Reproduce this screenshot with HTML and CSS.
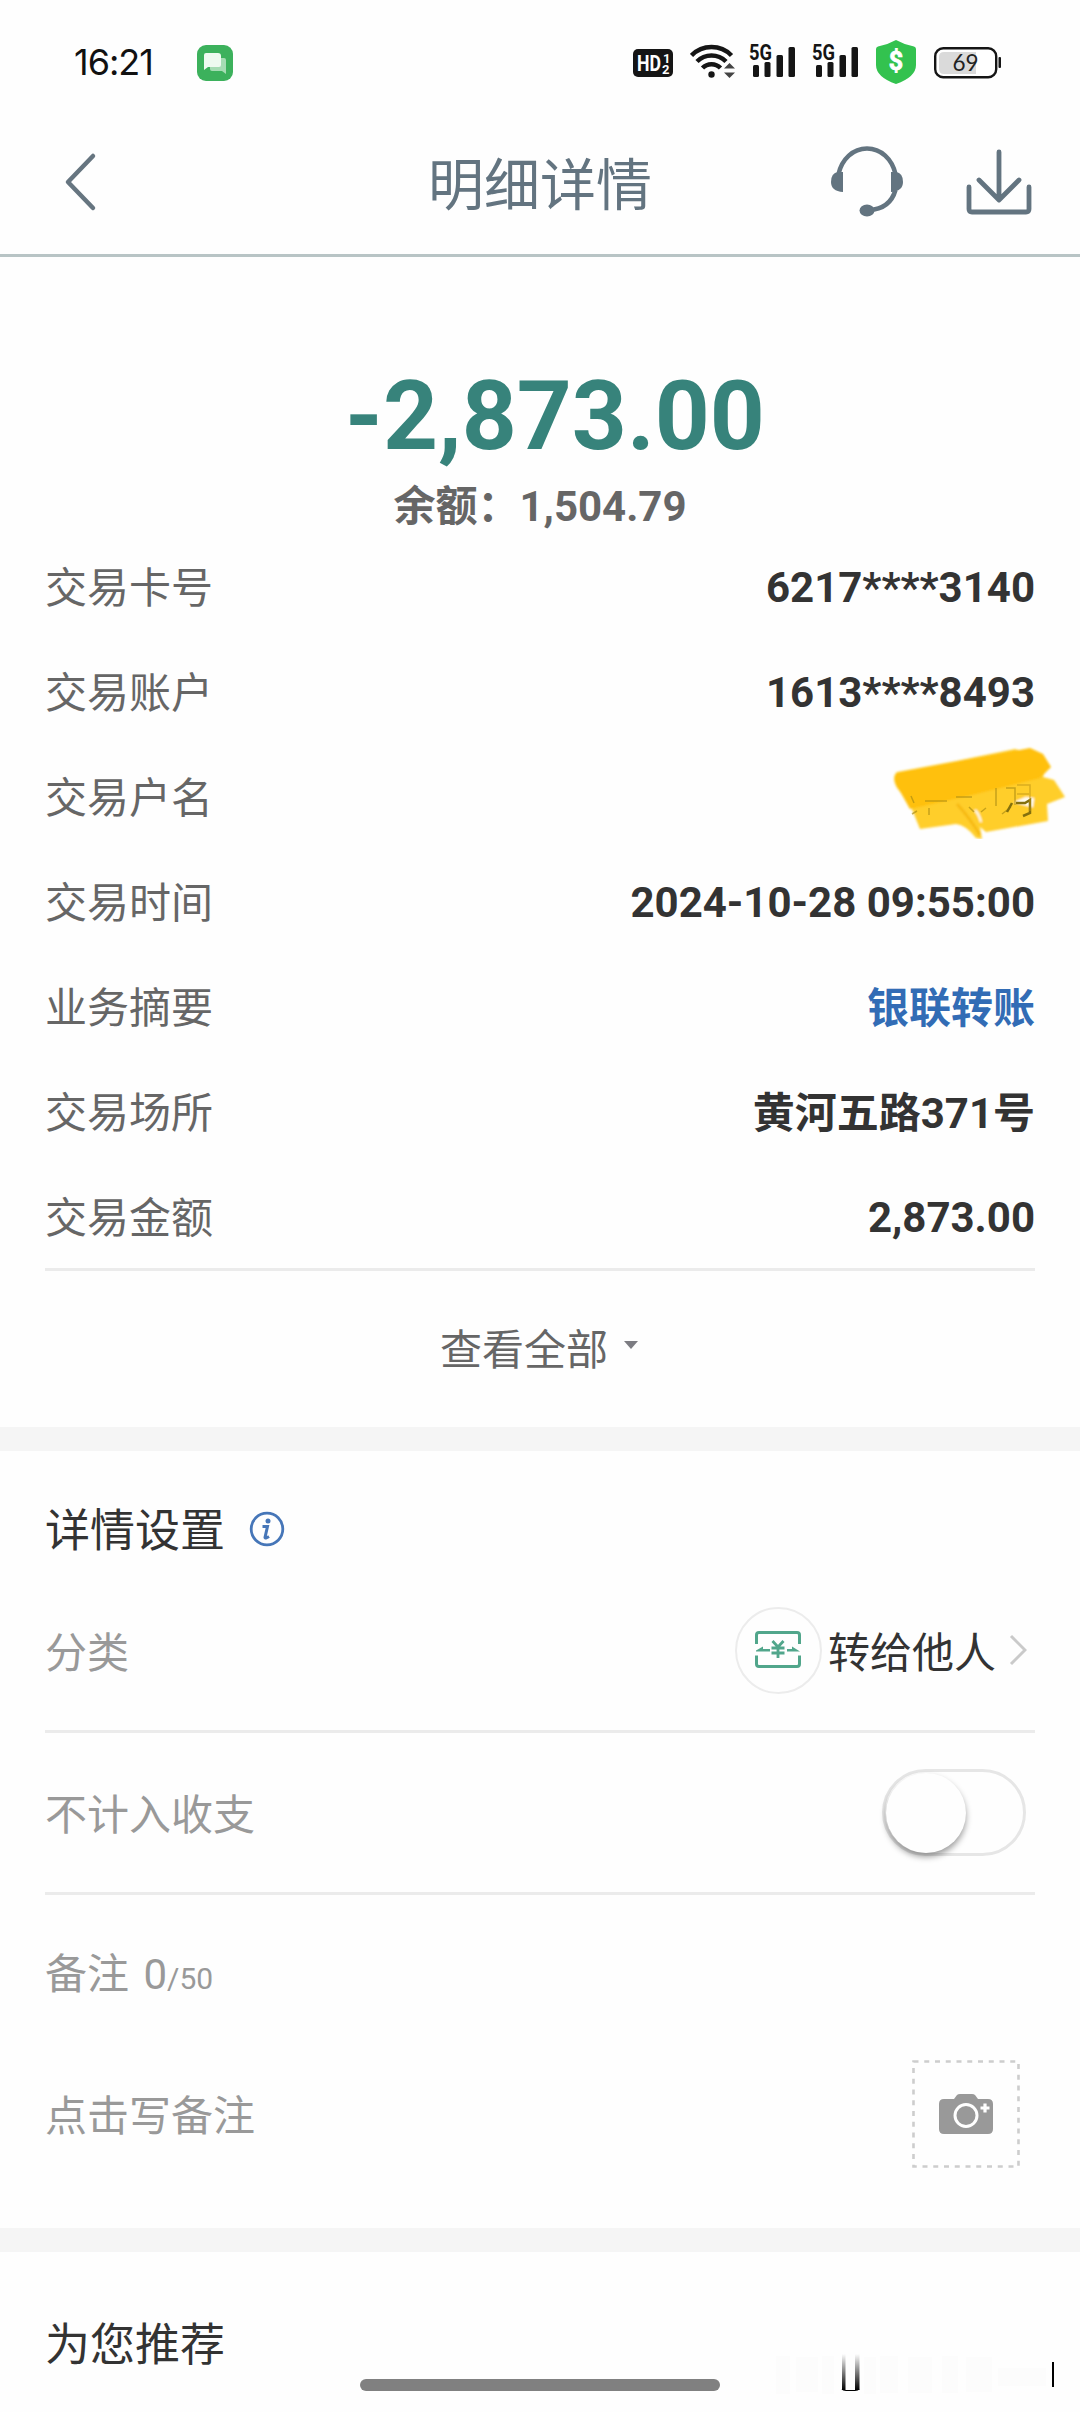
FILE: index.html
```html
<!DOCTYPE html>
<html lang="zh-CN">
<head>
<meta charset="utf-8">
<title>明细详情</title>
<link rel="stylesheet" href="styles.css">
</head>
<body>
<div class="screen">
  <div class="status">
    <span class="clock">16:21</span>
    <svg class="chat" width="36" height="36" viewBox="0 0 36 36">
      <rect width="36" height="36" rx="9" fill="#3cb15c"/>
      <path d="M14 13h13q2 0 2 2v14l-4-3H15q-2 0-2-2v-9z" fill="#a5dcb3"/>
      <path d="M9 8h12q3 0 3 3v9q0 2-2 2H11l-4 3V10q0-2 2-2z" fill="#eefaf0"/>
    </svg>
    <div class="status-right">
      <svg class="hd" width="40" height="28" viewBox="0 0 40 28">
        <rect width="40" height="28" rx="5" fill="#151515"/>
        <text class="glyph" x="4" y="22" font-size="22" textLength="24" lengthAdjust="spacingAndGlyphs" fill="#fff">HD</text>
        <text class="glyph" x="30" y="13.500" font-size="13" fill="#fff">1</text>
        <text class="glyph" x="29" y="25" font-size="13" fill="#fff">2</text>
      </svg>
      <svg class="wifi" width="46" height="36" viewBox="0 0 46 36">
        <g fill="none" stroke="#151515" stroke-width="4.500">
          <path d="M1.500 12.500A28 28 0 0 1 41.500 12.500"/>
          <path d="M7 18.500A20.500 20.500 0 0 1 36 18.500"/>
          <path d="M12.500 25A12.500 12.500 0 0 1 30.500 25"/>
        </g>
        <circle cx="21.500" cy="31.500" r="3.200" fill="#151515"/>
        <path d="M34 25.500l5.500-5.500 5.500 5.500zM34 29.500l5.500 5.500 5.500-5.500z" fill="#444"/>
      </svg>
      <svg class="signal" width="47" height="42" viewBox="0 -8 47 42">
        <g fill="#151515"><rect x="4" y="21" width="6" height="12" rx="1.500"/><rect x="15.500" y="18" width="6" height="15" rx="1.500"/><rect x="27.500" y="11" width="6.500" height="22" rx="1.500"/><rect x="39.500" y="3" width="6.500" height="30" rx="1.500"/></g>
        <text class="glyph" x="0" y="16" font-size="21.500" textLength="23" lengthAdjust="spacingAndGlyphs" fill="#151515">5G</text>
      </svg>
      <svg class="signal" width="47" height="42" viewBox="0 -8 47 42">
        <g fill="#151515"><rect x="4" y="21" width="6" height="12" rx="1.500"/><rect x="15.500" y="18" width="6" height="15" rx="1.500"/><rect x="27.500" y="11" width="6.500" height="22" rx="1.500"/><rect x="39.500" y="3" width="6.500" height="30" rx="1.500"/></g>
        <text class="glyph" x="0" y="16" font-size="21.500" textLength="23" lengthAdjust="spacingAndGlyphs" fill="#151515">5G</text>
      </svg>
      <svg class="shield" width="40" height="44" viewBox="0 0 40 44">
        <path d="M20 0Q29 5 38 6.500q2 .5 2 2.500v16q0 12-20 19Q0 37 0 25V9q0-2 2-2.500Q11 5 20 0z" fill="#33c24f"/>
        <text class="glyph" x="20" y="30" font-size="25" text-anchor="middle" fill="#fff" stroke="#fff" stroke-width=".8">$</text>
      </svg>
      <svg class="battery" width="68" height="32" viewBox="0 0 68 32">
        <rect x="1.200" y="1.200" width="61" height="29" rx="8" fill="#fff" stroke="#151515" stroke-width="2.400"/>
        <path d="M10 5h32v22H10q-5 0-5-5V10q0-5 5-5z" fill="#dadada"/>
        <rect x="64.500" y="10" width="2.500" height="11" rx="1" fill="#151515"/>
        <text class="charge" x="31.500" y="23.500" font-size="22.500" text-anchor="middle" fill="#222">69</text>
      </svg>
    </div>
  </div>

  <div class="nav">
    <svg class="back" width="34" height="60" viewBox="0 0 34 60"><path d="M29 4L4 30l25 26" fill="none" stroke="#667580" stroke-width="4.500" stroke-linecap="round" stroke-linejoin="round"/></svg>
    <h1>明细详情</h1>
    <div class="nav-actions">
      <svg width="76" height="76" viewBox="0 0 76 76">
        <path d="M9.500 30C13 15 24 4.500 38 4.500S63 15 66.500 30M66.500 46Q61 65 40 66" fill="none" stroke="#637480" stroke-width="4.500"/>
        <path d="M14 28v20q-12-1-12-10t7-10zM62 28v20q12-1 12-10t-7-10z" fill="#637480"/>
        <ellipse cx="38" cy="66.500" rx="7.500" ry="6" fill="#637480"/>
      </svg>
      <svg class="save" width="68" height="68" viewBox="0 0 68 68">
        <path d="M34 4v47M14 32l20 20 20-20M4 39v22q0 3 3 3h54q3 0 3-3V39" fill="none" stroke="#637480" stroke-width="4.800" stroke-linecap="round" stroke-linejoin="round"/>
      </svg>
    </div>
  </div>

  <section class="summary">
    <div class="amount">-2,873.00</div>
    <div class="balance">余额：<span>1,504.79</span></div>
  </section>

  <dl class="facts">
    <div class="fact"><dt>交易卡号</dt><dd>6217****3140</dd></div>
    <div class="fact"><dt>交易账户</dt><dd>1613****8493</dd></div>
    <div class="fact"><dt>交易户名</dt><dd class="masked">
      <svg width="180" height="105" viewBox="0 0 180 105">
        <defs><filter id="soft"><feGaussianBlur stdDeviation="1.300"/></filter></defs>
        <g filter="url(#soft)">
          <path d="M6 38Q0 43 6 54l12 14 11 27 36-5q10 1 20 14l6 1-2-12 6 5 62-11-1-17 18-7-11-17-11-3 4-12-7-12-9 1-16-5L65 27z" fill="#ffce2b"/>
          <path d="M6 39L65 28l74-14 13 6 8 13-11 11-72 18-58 13L6 52q-4-8 0-13z" fill="#ffc008"/>
          <path d="M66 70q12 13 23 31" fill="none" stroke="#f6b913" stroke-width="3"/>
          <path d="M84 76q4 4 6 12M126 68l9-4 7 1-1 7z" fill="#fffbe5" stroke="#fff" stroke-width="2"/>
        </g>
        <g fill="none" stroke="#a78a12" stroke-width="1.500" opacity=".65">
          <path d="M20 62l3 7M21 80l5-3M34 67h22M38 74v7M65 63h16M78 73l5 5M90 78l5-4M105 54v18M115 54h9v17M111 80l9-7"/>
        </g>
        <path d="M125 69h9l5-3v13l-7 3M121 69l-5 9" fill="none" stroke="#84700e" stroke-width="2.500"/>
        <path d="M126 51h13v26M126 60h12" fill="none" stroke="#c19717" stroke-width="1.500" opacity=".6"/>
      </svg>
    </dd></div>
    <div class="fact"><dt>交易时间</dt><dd>2024-10-28 09:55:00</dd></div>
    <div class="fact"><dt>业务摘要</dt><dd class="link">银联转账</dd></div>
    <div class="fact"><dt>交易场所</dt><dd class="place">黄河五路371号</dd></div>
    <div class="fact"><dt>交易金额</dt><dd>2,873.00</dd></div>
  </dl>

  <div class="more"><span>查看全部</span><svg width="14" height="8" viewBox="0 0 14 8"><path d="M0 0h14L7 8z" fill="#7c7c82"/></svg></div>
  <div class="band"></div>

  <section class="settings">
    <div class="settings-title"><h2>详情设置</h2>
      <svg width="36" height="36" viewBox="0 0 36 36">
        <circle cx="18" cy="18" r="15.800" fill="none" stroke="#4676b8" stroke-width="2.800"/>
        <circle cx="19" cy="10" r="2.500" fill="#4676b8"/>
        <path d="M13.500 15.500h5l-2.500 11q0 1.500 4-1" fill="none" stroke="#4676b8" stroke-width="3"/>
      </svg>
    </div>
    <div class="row category">
      <span class="label">分类</span>
      <span class="badge">
        <svg width="48" height="40" viewBox="0 0 48 40" fill="none" stroke="#51a68b" stroke-width="3">
          <path d="M2.500 14V5q0-2.500 2.500-2.500h38q2.500 0 2.500 2.500v9M2.500 25.500V34q0 2.500 2.500 2.500h38q2.500 0 2.500-2.500v-8.500"/>
          <path d="M2 20.500l7-4v2.500h7v2.500H2zM46 21.500H33V19h5v-2.500z" fill="#51a68b" stroke="none"/>
          <path d="M18.500 11l5.500 6 5.500-6M17.500 18h13M17.500 23h13M24 17v11" stroke-width="2.800"/>
        </svg>
      </span>
      <span class="value">转给他人</span>
      <svg class="chevron" width="18" height="32" viewBox="0 0 18 32"><path d="M2 2l14 14L2 30" fill="none" stroke="#cacaca" stroke-width="3"/></svg>
    </div>
    <div class="row exclude"><span class="label">不计入收支</span><span class="toggle"><span class="knob"></span></span></div>
    <div class="note-title">备注 <span class="count">0<small>/50</small></span></div>
    <div class="note"><span class="label">点击写备注</span>
      <span class="photo">
        <svg width="108" height="108" viewBox="0 0 108 108">
          <rect x="1.500" y="1.500" width="105" height="105" fill="none" stroke="#cdcdcd" stroke-width="2.600" stroke-dasharray="5 5.750"/>
          <path d="M32 39h10l3-4q1-1 3-1h12q2 0 3 1l3 4h10q5 0 5 5v25q0 5-5 5H32q-5 0-5-5V44q0-5 5-5z" fill="#999"/>
          <circle cx="54" cy="55.500" r="11" fill="none" stroke="#fff" stroke-width="3"/>
          <path d="M73 43.500v9M68.500 48h9" stroke="#fff" stroke-width="3.200"/>
        </svg>
      </span>
    </div>
  </section>
  <div class="band"></div>
  <section class="recommend"><h2>为您推荐</h2></section>

  <div class="home-bar"></div>
  <svg class="residue" width="284" height="42" viewBox="0 0 284 42">
    <defs><linearGradient id="fade" x1="0" y1="0" x2="0" y2="1"><stop offset="0" stop-color="#000" stop-opacity="0"/><stop offset="1" stop-color="#000"/></linearGradient></defs>
    <g fill="#fcfcfc"><rect x="4" y="2" width="14" height="38"/><rect x="24" y="3" width="22" height="35"/><rect x="50" y="2" width="12" height="38"/><rect x="92" y="3" width="12" height="37"/><rect x="108" y="2" width="18" height="37"/><rect x="136" y="3" width="24" height="36"/><rect x="170" y="2" width="16" height="37"/><rect x="194" y="3" width="26" height="35"/><rect x="226" y="14" width="48" height="18"/></g>
    <rect x="70" y="0" width="3.500" height="36" fill="url(#fade)"/>
    <rect x="83" y="0" width="4.500" height="36" fill="url(#fade)"/>
    <path d="M70 35q1 1.500 4 1.500h9q3 0 4-1.500" fill="none" stroke="#000" stroke-width="1.200"/>
    <rect x="280" y="8" width="2" height="25" fill="#000"/>
  </svg>
</div>
</body>
</html>
```
FILE: styles.css
```css
* { box-sizing: border-box; }
body, h1, h2, dl, dd { margin: 0; }
body { background: #fefefe; }
svg { display: block; flex: none; }

.screen {
  position: relative;
  width: 1080px;
  height: 2412px;
  overflow: hidden;
  background: #fefefe;
  font-family: Roboto, "Noto Sans CJK SC", sans-serif;
  font-size: 42px;
  line-height: 56px;
  color: #333;
}

/* Status bar */
.status {
  display: flex;
  align-items: flex-start;
  height: 100px;
  padding: 0 78px 0 74px;
}
.clock {
  width: 123px;
  padding-top: 41px;
  font-family: Inter, sans-serif;
  font-size: 36px;
  line-height: 42px;
  letter-spacing: -1px;
  color: #111;
}
.chat { margin-top: 45px; }
.status-right { display: flex; margin-left: auto; }
.glyph { font-family: Roboto, sans-serif; font-weight: 700; }
.charge { font-family: Lato, sans-serif; }
.hd { margin: 49px 17px 0 0; }
.wifi { margin: 43px 13px 0 0; }
.signal { margin: 36px 16px 0 0; }
.shield { margin: 40px 18px 0 1px; }
.battery { margin-top: 47px; }

/* Title bar */
.nav {
  display: grid;
  grid-template-columns: 1fr auto 1fr;
  height: 157px;
  padding: 0 47px 0 64px;
  border-bottom: 3px solid #b8c4c5;
}
.back { margin-top: 52px; }
.nav h1 {
  font-size: 56px;
  font-weight: 400;
  line-height: 80px;
  margin: 46px 0 0 -17px;
  color: #637480;
}
.nav-actions {
  display: flex;
  justify-content: flex-end;
  gap: 60px;
  padding-top: 44px;
}
.save { margin-top: 4px; }

/* Amount */
.summary { height: 279px; padding-top: 103px; text-align: center; }
.amount {
  padding-left: 30px;
  font-size: 96px;
  font-weight: 700;
  line-height: 112px;
  color: #37837b;
}
.balance {
  margin-top: 7px;
  font-weight: 660;
  line-height: 56px;
  color: #666;
}

/* Transaction details */
.facts { margin: 0 45px; }
.fact {
  display: flex;
  justify-content: space-between;
  height: 105px;
  line-height: 105px;
}
.fact:last-child { border-bottom: 3px solid #ebebeb; }
.fact dt { color: #666; }
.fact dd { font-weight: 660; line-height: 104px; }
.fact .link { color: #326cb5; line-height: 106px; }
.fact .place { line-height: 106px; }
.fact .masked { margin: -12px -36px 0 0; }

.more {
  display: flex;
  justify-content: center;
  align-items: center;
  gap: 16px;
  height: 156px;
  padding: 3px 2px 0 0;
  color: #666;
}
.more svg { margin-top: -11px; }
.band { height: 24px; background: #f5f5f5; }

/* Settings */
.settings { height: 777px; padding: 38px 45px 0; }
h2 { font-size: 45px; font-weight: 400; line-height: 60px; }
.settings-title {
  display: flex;
  align-items: center;
  gap: 24px;
  height: 84px;
}
.settings-title h2 { padding-top: 2px; }
.settings-title svg { margin-top: -4px; }
.row {
  display: flex;
  align-items: center;
  border-bottom: 3px solid #ebebeb;
}
.label { margin-right: auto; padding-top: 6px; color: #999; }
.category { height: 160px; padding: 0 8px 3px 0; }
.category .label, .value { padding-top: 8px; }
.badge {
  display: flex;
  align-items: center;
  justify-content: center;
  width: 87px;
  height: 87px;
  border: 2px solid #ececec;
  border-radius: 50%;
}
.value { margin: 0 13px 0 6px; }
.exclude { height: 162px; padding-right: 9px; }
.toggle {
  width: 144px;
  height: 87px;
  padding: 1px;
  border: 3px solid #e6e6e6;
  border-radius: 44px;
}
.knob {
  display: block;
  width: 80px;
  height: 80px;
  border-radius: 50%;
  background: #fefefe;
  box-shadow: 0 4px 6px rgba(0, 0, 0, .38);
}
.note-title { height: 159px; line-height: 159px; color: #999; }
.count { margin-left: 4px; }
.count small { font-size: 30px; }
.note {
  display: flex;
  align-items: center;
  height: 120px;
  padding-right: 15px;
}

.recommend { padding: 54px 45px 0; }
.recommend h2 { line-height: 80px; }

/* Layers over the page */
.home-bar {
  position: absolute;
  left: 360px;
  top: 2379px;
  width: 360px;
  height: 12px;
  border-radius: 6px;
  background: #808080;
}
.residue { position: absolute; left: 772px; top: 2354px; }
```
